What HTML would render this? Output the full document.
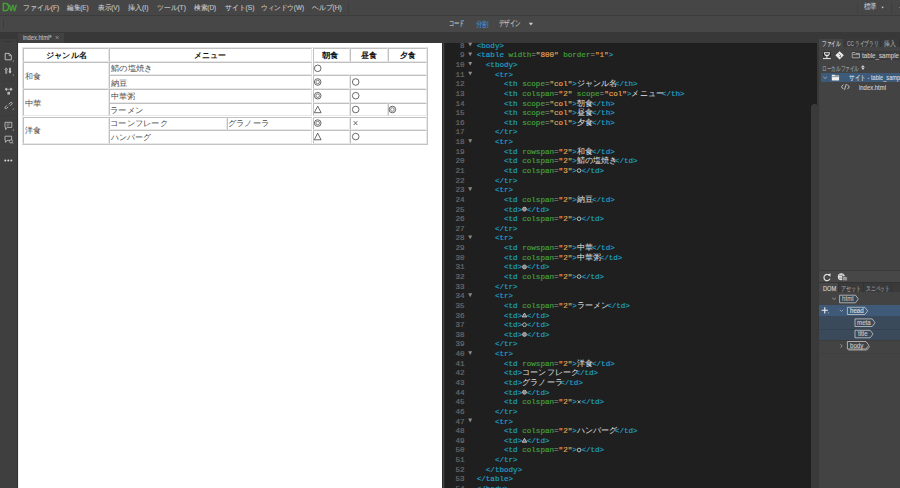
<!DOCTYPE html><html><head><meta charset="utf-8"><style>*{margin:0;padding:0;box-sizing:border-box}
html,body{width:900px;height:488px;overflow:hidden;background:#464646;font-family:"Liberation Sans",sans-serif}
.a{position:absolute}
.t{position:absolute;white-space:nowrap;transform-origin:0 0}
.c{position:absolute;box-sizing:border-box;border-style:solid;border-width:1px;border-color:#c0c0c0 #e8e8e8 #e8e8e8 #c0c0c0}
.ln{position:absolute;left:444px;width:372px;height:10px;font-family:"Liberation Mono",monospace;font-size:7.62px;line-height:10px;white-space:pre;color:#d8d8d8}
.ln b{font-weight:normal}
.n{position:absolute;right:0;width:0}
.tg{color:#1fa0c2}.at{color:#44a03c}.vl{color:#e2a452}.eq{color:#9a9a9a}.tx{color:#e0e0e0}
.j{display:inline-block;font-family:"Liberation Sans",sans-serif;font-size:7.5px;letter-spacing:0.1px;-webkit-text-stroke:0;vertical-align:top;overflow:visible;color:#e4e4e4}
</style></head><body>
<div class="a" style="left:0px;top:0px;width:900px;height:15px;background:#464646;"></div>
<div class="a" style="left:0px;top:15px;width:900px;height:1px;background:#3c3c3c;"></div>
<div class="a" style="left:0px;top:16px;width:900px;height:16px;background:#474747;"></div>
<div class="a" style="left:0px;top:32px;width:900px;height:11px;background:#383838;"></div>
<div class="a" style="left:18px;top:33px;width:46px;height:10px;background:#414141;"></div>
<div class="a" style="left:0px;top:39px;width:17px;height:449px;background:#3f3f3f;"></div>
<div class="a" style="left:17px;top:39px;width:1px;height:449px;background:#333333;"></div>
<div class="a" style="left:18px;top:43px;width:424px;height:445px;background:#ffffff;"></div>
<div class="a" style="left:18px;top:43px;width:1px;height:445px;background:#f0f0f0;"></div>
<div class="a" style="left:442px;top:43px;width:1px;height:445px;background:#2c2c2c;"></div>
<div class="a" style="left:443px;top:43px;width:1px;height:445px;background:#444444;"></div>
<div class="a" style="left:444px;top:43px;width:1px;height:445px;background:#2a2a2a;"></div>
<div class="a" style="left:445px;top:43px;width:372px;height:445px;background:#1f1f1f;"></div>
<div class="a" style="left:817px;top:32px;width:83px;height:456px;background:#434343;"></div>
<div class="a" style="left:817px;top:32px;width:2px;height:456px;background:#383838;"></div>
<div class="a" style="left:819px;top:32px;width:81px;height:7px;background:#383838;"></div>
<div class="a" style="left:811px;top:104px;width:7px;height:390px;background:#3a3a3a;border-radius:3.5px 3.5px 0 0"></div>
<div class="a" style="left:348px;top:3px;width:1px;height:10px;background:#3e3e3e;"></div>
<div class="a" style="left:857px;top:3px;width:1px;height:10px;background:#3e3e3e;"></div>
<div class="a" style="left:891px;top:3px;width:1px;height:10px;background:#3e3e3e;"></div>
<div class="a" style="left:3px;top:19px;width:1px;height:10px;background:#3c3c3c;"></div>
<div class="a" style="left:3px;top:41px;width:10px;height:1px;background:#353535;"></div>
<svg class="a" style="left:0;top:0" width="900" height="488"><path d="M881.3 6.8 L883.9 6.8 L882.6 8.6Z" fill="#d0d0d0"/><path d="M528.8 22.8 L533 22.8 L530.9 25.6Z" fill="#d0d0d0"/><path d="M55.6 36 L58.7 39.1 M58.7 36 L55.6 39.1" stroke="#8e8e8e" stroke-width="0.9"/></svg>
<div class="t" style="left:2px;top:0.6px;font-size:10.5px;line-height:12px;color:#45a632;letter-spacing:-0.5px;-webkit-text-stroke:0.3px #45a632">Dw</div>
<div class="a" style="left:898.8px;top:6.5px;width:1.2px;height:1.5px;background:#7a7a7a;"></div>
<div class="a" style="left:22px;top:47px;width:406px;height:98px;border:1px solid;border-color:#e6e6e6 #c4c4c4 #c4c4c4 #e6e6e6"></div>
<div class="c" style="left:23px;top:48.0px;width:85.5px;height:13.5px"></div>
<div class="c" style="left:109px;top:48.0px;width:203px;height:13.5px"></div>
<div class="c" style="left:312.5px;top:48.0px;width:37.0px;height:13.5px"></div>
<div class="c" style="left:350px;top:48.0px;width:37.5px;height:13.5px"></div>
<div class="c" style="left:388px;top:48.0px;width:39px;height:13.5px"></div>
<div class="c" style="left:23px;top:61.7px;width:85.5px;height:27.2px"></div>
<div class="c" style="left:109px;top:61.7px;width:203px;height:13.5px"></div>
<div class="c" style="left:312.5px;top:61.7px;width:114.5px;height:13.5px"></div>
<div class="c" style="left:109px;top:75.4px;width:203px;height:13.5px"></div>
<div class="c" style="left:312.5px;top:75.4px;width:37.0px;height:13.5px"></div>
<div class="c" style="left:350px;top:75.4px;width:77px;height:13.5px"></div>
<div class="c" style="left:23px;top:89.1px;width:85.5px;height:27.2px"></div>
<div class="c" style="left:109px;top:89.1px;width:203px;height:13.5px"></div>
<div class="c" style="left:312.5px;top:89.1px;width:37.0px;height:13.5px"></div>
<div class="c" style="left:350px;top:89.1px;width:77px;height:13.5px"></div>
<div class="c" style="left:109px;top:102.8px;width:203px;height:13.5px"></div>
<div class="c" style="left:312.5px;top:102.8px;width:37.0px;height:13.5px"></div>
<div class="c" style="left:350px;top:102.8px;width:37.5px;height:13.5px"></div>
<div class="c" style="left:388px;top:102.8px;width:39px;height:13.5px"></div>
<div class="c" style="left:23px;top:116.5px;width:85.5px;height:27.2px"></div>
<div class="c" style="left:109px;top:116.5px;width:117.5px;height:13.5px"></div>
<div class="c" style="left:227px;top:116.5px;width:85px;height:13.5px"></div>
<div class="c" style="left:312.5px;top:116.5px;width:37.0px;height:13.5px"></div>
<div class="c" style="left:350px;top:116.5px;width:77px;height:13.5px"></div>
<div class="c" style="left:109px;top:130.2px;width:203px;height:13.5px"></div>
<div class="c" style="left:312.5px;top:130.2px;width:37.0px;height:13.5px"></div>
<div class="c" style="left:350px;top:130.2px;width:77px;height:13.5px"></div>
<svg class="a" style="left:0;top:0" width="900" height="488"><circle cx="317.7" cy="68.3" r="3.3" fill="none" stroke="#444" stroke-width="0.8"/><circle cx="317.7" cy="82" r="3.3" fill="none" stroke="#444" stroke-width="0.8"/><circle cx="317.7" cy="82" r="1.8" fill="none" stroke="#555" stroke-width="0.7"/><circle cx="355.7" cy="82" r="3.3" fill="none" stroke="#444" stroke-width="0.8"/><circle cx="317.7" cy="95.7" r="3.3" fill="none" stroke="#444" stroke-width="0.8"/><circle cx="317.7" cy="95.7" r="1.8" fill="none" stroke="#555" stroke-width="0.7"/><circle cx="355.7" cy="95.7" r="3.3" fill="none" stroke="#444" stroke-width="0.8"/><path d="M314.3 112.7 L317.7 106.1 L321.1 112.7Z" fill="none" stroke="#444" stroke-width="0.8"/><circle cx="355.7" cy="109.5" r="3.3" fill="none" stroke="#444" stroke-width="0.8"/><circle cx="392.4" cy="109.5" r="3.3" fill="none" stroke="#444" stroke-width="0.8"/><circle cx="392.4" cy="109.5" r="1.8" fill="none" stroke="#555" stroke-width="0.7"/><circle cx="317.7" cy="123.1" r="3.3" fill="none" stroke="#444" stroke-width="0.8"/><circle cx="317.7" cy="123.1" r="1.8" fill="none" stroke="#555" stroke-width="0.7"/><path d="M353.7 121.1 L357.4 125.1 M357.4 121.1 L353.7 125.1" stroke="#444" stroke-width="0.8"/><path d="M314.3 139.79999999999998 L317.7 133.2 L321.1 139.79999999999998Z" fill="none" stroke="#444" stroke-width="0.8"/><circle cx="355.7" cy="136.6" r="3.3" fill="none" stroke="#444" stroke-width="0.8"/></svg>
<div class="a" style="left:819px;top:39px;width:24px;height:8px;background:#454545;"></div>
<div class="a" style="left:843px;top:39px;width:57px;height:8px;background:#3a3a3a;"></div>
<div class="a" style="left:880px;top:39px;width:1px;height:8px;background:#333333;"></div>
<div class="a" style="left:899px;top:39px;width:1px;height:8px;background:#333333;"></div>
<div class="a" style="left:851px;top:51px;width:49px;height:8.5px;background:#3d3d3d;border:1px solid #393939;border-right:none"></div>
<div class="a" style="left:820.7px;top:73.2px;width:79.3px;height:9.1px;background:#3d5a78;"></div>
<div class="a" style="left:819px;top:270px;width:81px;height:1px;background:#3a3a3a;"></div>
<div class="a" style="left:819px;top:271px;width:81px;height:11px;background:#474747;"></div>
<div class="a" style="left:819px;top:282px;width:81px;height:1px;background:#333333;"></div>
<div class="a" style="left:819px;top:283px;width:81px;height:8.5px;background:#3a3a3a;"></div>
<div class="a" style="left:819px;top:283px;width:19.5px;height:8.5px;background:#474747;"></div>
<div class="a" style="left:838.3px;top:283px;width:0.8px;height:8.5px;background:#333333;"></div>
<div class="a" style="left:862.5px;top:283px;width:0.8px;height:8.5px;background:#333333;"></div>
<div class="a" style="left:891px;top:283px;width:0.8px;height:8.5px;background:#333333;"></div>
<div class="a" style="left:819px;top:305.3px;width:81px;height:10.7px;background:#3e5a78;"></div>
<div class="a" style="left:819px;top:316.3px;width:81px;height:23.7px;background:#3b4a5a;"></div>
<div class="a" style="left:819px;top:328.5px;width:81px;height:0.5px;background:#36424f;"></div>
<div class="a" style="left:819px;top:340px;width:81px;height:0.5px;background:#3c3c3c;"></div>
<div class="a" style="left:819px;top:352.5px;width:81px;height:0.6px;background:#3f3f3f;"></div>
<svg class="a" style="left:0;top:0" width="900" height="488"><path d="M823 51.6 H830.8 V56.2 H823Z" fill="#1e1e1e"/><path d="M823.6 52.3 H830.2 L829.2 55.4 Q826.9 57 824.6 55.4Z" fill="#e8e8e8"/><path d="M824.8 52.9 H829 L828.5 54.5 Q826.9 55.3 825.3 54.5Z" fill="#555"/><path d="M826.9 56 V58.3 M823 58.6 H830.8" stroke="#e8e8e8" stroke-width="1"/><path d="M839.6 51.2 L843.8 55.3 L839.6 59.4 L835.4 55.3Z" fill="#ececec"/><path d="M838.6 53.6 L840.6 55.6 V57.4 M840.6 55.6 L839.5 57" stroke="#555" stroke-width="0.7" fill="none"/><path d="M852.2 52.6 H855 L855.8 53.4 H859.4 V57.8 H852.2Z" fill="none" stroke="#bdbdbd" stroke-width="0.8"/><path d="M852.6 54.6 H859" stroke="#bdbdbd" stroke-width="0.7"/><path d="M860.8 67.4 L862.9 65.3 L865 67.4Z" fill="#d8d8d8"/><path d="M861.9 68 H863.9 V69.4 H861.9Z" fill="#d0d0d0"/><path d="M823.3 76.8 L825.1 78.5 L826.9 76.8" stroke="#aab8c8" stroke-width="0.8" fill="none"/><path d="M831.8 74.8 H834.6 L835.4 75.6 H839.1 V80.4 H831.8Z" fill="#f0f0f0"/><path d="M832.2 76.6 H838.7" stroke="#3d5a78" stroke-width="0.6"/><path d="M843.4 84.6 L841.5 86.9 L843.4 89.2 M847.4 84.6 L849.3 86.9 L847.4 89.2 M846.3 84 L844.5 89.8" stroke="#d0d0d0" stroke-width="0.9" fill="none"/><path d="M829.6 275.8 A3.1 3.1 0 1 0 829.9 278.8" stroke="#e0e0e0" stroke-width="1.2" fill="none"/><path d="M827.6 274.2 L830.6 273.6 L830.4 276.8Z" fill="#e0e0e0"/><circle cx="841.3" cy="276.8" r="3.5" fill="#e0e0e0"/><path d="M839 275.2 Q841 276 843.4 274.8 M839.2 278.2 Q841 277.6 843.6 278.6" stroke="#555" stroke-width="0.6" fill="none"/><rect x="842.6" y="276.6" width="4.6" height="4.2" fill="#9a9a9a" stroke="#474747" stroke-width="0.6"/><path d="M832.2 297.8 L834.1 299.5 L836 297.8" stroke="#a8a8a8" stroke-width="0.8" fill="none"/><path d="M839.8 309.8 L841.5 311.4 L843.2 309.8" stroke="#a8b4c0" stroke-width="0.8" fill="none"/><path d="M840.5 344.2 L842.2 345.9 L840.5 347.6" stroke="#a8a8a8" stroke-width="0.8" fill="none"/><path d="M824.8 307.2 V313.4 M821.7 310.3 H827.9" stroke="#f0f0f0" stroke-width="1.1"/><path d="M827.6 313.2 L828.8 313.2 L828.8 312Z" fill="#d0d0d0"/><path d="M839.6 295.2 H855.5 L858.3 299.0 L855.5 302.8 H839.6Z" fill="#3a4552" stroke="#d0d0d0" stroke-width="0.75"/><path d="M847.4 307.3 H864.9000000000001 L867.7 310.9 L864.9000000000001 314.5 H847.4Z" fill="#3e5a78" stroke="#d0d0d0" stroke-width="0.75"/><path d="M855.0 318.9 H872.2 L875.0 322.7 L872.2 326.5 H855.0Z" fill="#3b4a5a" stroke="#d0d0d0" stroke-width="0.75"/><path d="M855.0 330.3 H870.2 L873.0 334.05 L870.2 337.8 H855.0Z" fill="#3b4a5a" stroke="#d0d0d0" stroke-width="0.75"/><path d="M848.4 350.0 H867.0 L869.8 346.25" stroke="#c8c8c8" stroke-width="0.7" fill="none"/><path d="M847.4 341.5 H866.0 L868.8 345.25 L866.0 349.0 H847.4Z" fill="#434343" stroke="#d0d0d0" stroke-width="0.75"/></svg>
<div class="t" style="left:842.3px;top:295.2px;font-size:7px;line-height:7px;color:#c4c0bc;font-weight:normal;-webkit-text-stroke:0.1px;transform:scaleX(0.88)">html</div>
<div class="t" style="left:849.8px;top:307.3px;font-size:7px;line-height:7px;color:#e0e0e0;font-weight:normal;-webkit-text-stroke:0.1px;transform:scaleX(0.88)">head</div>
<div class="t" style="left:857.4px;top:319px;font-size:7px;line-height:7px;color:#d0ccc8;font-weight:normal;-webkit-text-stroke:0.1px;transform:scaleX(0.88)">meta</div>
<div class="t" style="left:857.6px;top:330.4px;font-size:7px;line-height:7px;color:#d0ccc8;font-weight:normal;-webkit-text-stroke:0.1px;transform:scaleX(0.88)">title</div>
<div class="t" style="left:849.8px;top:341.6px;font-size:7px;line-height:7px;color:#d0ccc8;font-weight:normal;-webkit-text-stroke:0.1px;transform:scaleX(0.88)">body</div>
<svg class="a" style="left:0;top:0" width="20" height="200"><path d="M5.2 53.4 H9.3 L11.3 55.4 V59.8 H5.2Z" fill="none" stroke="#c8c8c8" stroke-width="0.9"/><path d="M9.1 53.6 V55.6 H11.1" fill="none" stroke="#c8c8c8" stroke-width="0.7"/><path d="M12.4 61.6 L13.8 61.6 L13.8 60.2Z" fill="#bbb"/><path d="M6.2 67.8 L4.8 69.6 H5.7 V73.4 H6.7 V69.6 H7.6Z" fill="none" stroke="#c8c8c8" stroke-width="0.7"/><path d="M9.3 67.8 V71.6 H8.4 L10 73.6 L11.6 71.6 H10.7 V67.8Z" fill="#dcdcdc"/><path d="M12.4 75.6 L13.8 75.6 L13.8 74.2Z" fill="#bbb"/><path d="M2 81.3 H15" stroke="#3a3a3a" stroke-width="0.7"/><path d="M5 89.3 L6.7 88 V90.6Z M12.3 89.3 L10.6 88 V90.6Z M6.5 89.3 H10.8" fill="#d0d0d0" stroke="#d0d0d0" stroke-width="0.6"/><rect x="7.4" y="91.8" width="2.6" height="2.8" fill="#b8b8b8"/><path d="M8.6 104.4 L10.4 102.6 Q11.2 101.9 11.9 102.6 Q12.5 103.3 11.8 104 L10 105.8" fill="none" stroke="#c0c0c0" stroke-width="0.9"/><path d="M8.2 106.8 L6.6 108.4 Q5.9 109.1 5.2 108.4 Q4.6 107.7 5.3 107 L6.9 105.4" fill="none" stroke="#c0c0c0" stroke-width="0.9"/><path d="M12.4 109.6 L13.8 109.6 L13.8 108.2Z" fill="#bbb"/><path d="M2 115.5 H15" stroke="#3a3a3a" stroke-width="0.7"/><path d="M5 122.3 H11.8 V127.4 H7.2 L5.6 129.6 V127.4 H5Z" fill="none" stroke="#c8c8c8" stroke-width="0.8"/><path d="M6.6 124 H10 M6.6 125.8 H8.8" stroke="#c8c8c8" stroke-width="0.6"/><path d="M12.4 130.4 L13.8 130.4 L13.8 129Z" fill="#bbb"/><path d="M5 136.2 H11.6 V140.4 H7 L5.6 142.4 V140.4 H5Z" fill="none" stroke="#c8c8c8" stroke-width="0.8"/><circle cx="11" cy="141.4" r="1.6" fill="#3f3f3f" stroke="#c8c8c8" stroke-width="0.7"/><path d="M12.1 142.5 L13 143.5" stroke="#c8c8c8" stroke-width="0.8"/><path d="M2 150 H15" stroke="#3a3a3a" stroke-width="0.7"/><circle cx="5.3" cy="160.4" r="1" fill="#d8d8d8"/><circle cx="8.3" cy="160.4" r="1" fill="#d8d8d8"/><circle cx="11.3" cy="160.4" r="1" fill="#d8d8d8"/></svg>
<div class="t" style="left:23.41px;top:4.50px;font-size:6.8px;line-height:6.8px;color:#c4c4c4;font-weight:normal;transform:scaleX(0.989);-webkit-text-stroke:0.12px">ファイル(F)</div>
<div class="t" style="left:66.70px;top:5.00px;font-size:6.8px;line-height:6.8px;color:#c4c4c4;font-weight:normal;transform:scaleX(0.939);-webkit-text-stroke:0.12px">編集(E)</div>
<div class="t" style="left:97.50px;top:5.00px;font-size:6.8px;line-height:6.8px;color:#c4c4c4;font-weight:normal;transform:scaleX(0.938);-webkit-text-stroke:0.12px">表示(V)</div>
<div class="t" style="left:128.30px;top:5.00px;font-size:6.8px;line-height:6.8px;color:#c4c4c4;font-weight:normal;transform:scaleX(1.005);-webkit-text-stroke:0.12px">挿入(I)</div>
<div class="t" style="left:156.83px;top:4.50px;font-size:6.8px;line-height:6.8px;color:#c4c4c4;font-weight:normal;transform:scaleX(0.972);-webkit-text-stroke:0.12px">ツール(T)</div>
<div class="t" style="left:193.90px;top:5.00px;font-size:6.8px;line-height:6.8px;color:#c4c4c4;font-weight:normal;transform:scaleX(0.950);-webkit-text-stroke:0.12px">検索(D)</div>
<div class="t" style="left:225.00px;top:4.50px;font-size:6.8px;line-height:6.8px;color:#c4c4c4;font-weight:normal;transform:scaleX(0.976);-webkit-text-stroke:0.12px">サイト(S)</div>
<div class="t" style="left:260.76px;top:4.50px;font-size:6.8px;line-height:6.8px;color:#c4c4c4;font-weight:normal;transform:scaleX(0.938);-webkit-text-stroke:0.12px">ウィンドウ(W)</div>
<div class="t" style="left:311.82px;top:5.00px;font-size:6.8px;line-height:6.8px;color:#c4c4c4;font-weight:normal;transform:scaleX(0.980);-webkit-text-stroke:0.12px">ヘルプ(H)</div>
<div class="t" style="left:864.00px;top:3.20px;font-size:7.5px;line-height:7.5px;color:#d0d0d0;font-weight:normal;transform:scaleX(0.800);-webkit-text-stroke:0px">標準</div>
<div class="t" style="left:449.15px;top:20.20px;font-size:7.5px;line-height:7.5px;color:#c8c8c8;font-weight:normal;transform:scaleX(0.655);-webkit-text-stroke:0.12px">コード</div>
<div class="t" style="left:475.60px;top:20.70px;font-size:7.5px;line-height:7.5px;color:#3f9df0;font-weight:normal;transform:scaleX(0.812);-webkit-text-stroke:0px">分割</div>
<div class="t" style="left:498.90px;top:20.20px;font-size:7.5px;line-height:7.5px;color:#c8c8c8;font-weight:normal;transform:scaleX(0.687);-webkit-text-stroke:0.12px">デザイン</div>
<div class="t" style="left:23.30px;top:34.40px;font-size:7px;line-height:7px;color:#bdbdbd;font-weight:normal;transform:scaleX(0.824);-webkit-text-stroke:0.12px">index.html*</div>
<div class="t" style="left:45.77px;top:52.20px;font-size:7.8px;line-height:7.8px;color:#111;font-weight:bold;transform:scaleX(1.029);-webkit-text-stroke:0px">ジャンル名</div>
<div class="t" style="left:194.41px;top:51.70px;font-size:7.8px;line-height:7.8px;color:#111;font-weight:bold;transform:scaleX(0.987);-webkit-text-stroke:0px">メニュー</div>
<div class="t" style="left:322.20px;top:52.20px;font-size:7.8px;line-height:7.8px;color:#111;font-weight:bold;transform:scaleX(1.050);-webkit-text-stroke:0px">朝食</div>
<div class="t" style="left:360.60px;top:52.20px;font-size:7.8px;line-height:7.8px;color:#111;font-weight:bold;transform:scaleX(0.994);-webkit-text-stroke:0px">昼食</div>
<div class="t" style="left:399.70px;top:52.20px;font-size:7.8px;line-height:7.8px;color:#111;font-weight:bold;transform:scaleX(0.950);-webkit-text-stroke:0px">夕食</div>
<div class="t" style="left:24.80px;top:73.00px;font-size:7.8px;line-height:7.8px;color:#484848;font-weight:normal;transform:scaleX(0.994);-webkit-text-stroke:0px">和食</div>
<div class="t" style="left:24.80px;top:100.00px;font-size:7.8px;line-height:7.8px;color:#484848;font-weight:normal;transform:scaleX(1.060);-webkit-text-stroke:0px">中華</div>
<div class="t" style="left:24.80px;top:127.00px;font-size:7.8px;line-height:7.8px;color:#484848;font-weight:normal;transform:scaleX(0.994);-webkit-text-stroke:0px">洋食</div>
<div class="t" style="left:110.60px;top:64.90px;font-size:7.8px;line-height:7.8px;color:#484848;font-weight:normal;transform:scaleX(1.037);-webkit-text-stroke:0px">鯖の塩焼き</div>
<div class="t" style="left:110.60px;top:79.50px;font-size:7.8px;line-height:7.8px;color:#484848;font-weight:normal;transform:scaleX(1.040);-webkit-text-stroke:0px">納豆</div>
<div class="t" style="left:110.60px;top:93.20px;font-size:7.8px;line-height:7.8px;color:#484848;font-weight:normal;transform:scaleX(1.008);-webkit-text-stroke:0px">中華粥</div>
<div class="t" style="left:109.55px;top:106.60px;font-size:7.8px;line-height:7.8px;color:#484848;font-weight:normal;transform:scaleX(1.047);-webkit-text-stroke:0px">ラーメン</div>
<div class="t" style="left:109.56px;top:120.10px;font-size:7.8px;line-height:7.8px;color:#484848;font-weight:normal;transform:scaleX(1.037);-webkit-text-stroke:0px">コーンフレーク</div>
<div class="t" style="left:227.57px;top:120.10px;font-size:7.8px;line-height:7.8px;color:#484848;font-weight:normal;transform:scaleX(1.029);-webkit-text-stroke:0px">グラノーラ</div>
<div class="t" style="left:110.60px;top:133.60px;font-size:7.8px;line-height:7.8px;color:#484848;font-weight:normal;transform:scaleX(0.985);-webkit-text-stroke:0px">ハンバーグ</div>
<div class="t" style="left:822.25px;top:39.70px;font-size:7px;line-height:7px;color:#d8d8d8;font-weight:normal;transform:scaleX(0.652);-webkit-text-stroke:0.12px">ファイル</div>
<div class="t" style="left:846.80px;top:39.70px;font-size:7px;line-height:7px;color:#a8a8a8;font-weight:normal;transform:scaleX(0.669);-webkit-text-stroke:0.12px">CC ライブラリ</div>
<div class="t" style="left:884.40px;top:40.20px;font-size:7px;line-height:7px;color:#a8a8a8;font-weight:normal;transform:scaleX(0.821);-webkit-text-stroke:0.12px">挿入</div>
<div class="t" style="left:861.60px;top:51.90px;font-size:7.5px;line-height:7.5px;color:#c8c8c8;font-weight:normal;transform:scaleX(0.831);-webkit-text-stroke:0.12px">table_sample 2</div>
<div class="t" style="left:822.34px;top:64.70px;font-size:7px;line-height:7px;color:#a0a0a0;font-weight:normal;transform:scaleX(0.662);-webkit-text-stroke:0.12px">ローカルファイル</div>
<div class="t" style="left:849.30px;top:73.90px;font-size:7px;line-height:7px;color:#d0dae4;font-weight:normal;transform:scaleX(0.807);-webkit-text-stroke:0.12px">サイト - table_sample 2</div>
<div class="t" style="left:859.40px;top:84.20px;font-size:7px;line-height:7px;color:#d0d0d0;font-weight:normal;transform:scaleX(0.847);-webkit-text-stroke:0.12px">index.html</div>
<div class="t" style="left:823.00px;top:284.70px;font-size:7px;line-height:7px;color:#d8d8d8;font-weight:normal;transform:scaleX(0.812);-webkit-text-stroke:0.12px">DOM</div>
<div class="t" style="left:841.07px;top:284.70px;font-size:7px;line-height:7px;color:#a0a0a0;font-weight:normal;transform:scaleX(0.732);-webkit-text-stroke:0.12px">アセット</div>
<div class="t" style="left:865.92px;top:284.70px;font-size:7px;line-height:7px;color:#a0a0a0;font-weight:normal;transform:scaleX(0.681);-webkit-text-stroke:0.12px">スニペット</div>
<div class="t" style="left:444px;top:40.70px;width:20.6px;text-align:right;font-family:'Liberation Mono',monospace;font-size:7.62px;line-height:10px;color:#6a6a6a;-webkit-text-stroke:0.2px">8</div>
<div class="t" style="left:476.70px;top:40.70px;font-family:'Liberation Mono',monospace;font-size:7.583px;line-height:10px;white-space:pre;-webkit-text-stroke:0.18px"><span class="tg">&lt;body&gt;</span></div>
<div class="t" style="left:444px;top:50.34px;width:20.6px;text-align:right;font-family:'Liberation Mono',monospace;font-size:7.62px;line-height:10px;color:#6a6a6a;-webkit-text-stroke:0.2px">9</div>
<div class="t" style="left:476.70px;top:50.34px;font-family:'Liberation Mono',monospace;font-size:7.583px;line-height:10px;white-space:pre;-webkit-text-stroke:0.18px"><span class="tg">&lt;table </span><span class="at">width</span><span class="eq">=</span><span class="vl">&quot;800&quot;</span><span class="tx"> </span><span class="at">border</span><span class="eq">=</span><span class="vl">&quot;1&quot;</span><span class="tg">&gt;</span></div>
<div class="t" style="left:444px;top:59.97px;width:20.6px;text-align:right;font-family:'Liberation Mono',monospace;font-size:7.62px;line-height:10px;color:#6a6a6a;-webkit-text-stroke:0.2px">10</div>
<div class="t" style="left:485.80px;top:59.97px;font-family:'Liberation Mono',monospace;font-size:7.583px;line-height:10px;white-space:pre;-webkit-text-stroke:0.18px"><span class="tg">&lt;tbody&gt;</span></div>
<div class="t" style="left:444px;top:69.61px;width:20.6px;text-align:right;font-family:'Liberation Mono',monospace;font-size:7.62px;line-height:10px;color:#6a6a6a;-webkit-text-stroke:0.2px">11</div>
<div class="t" style="left:494.90px;top:69.61px;font-family:'Liberation Mono',monospace;font-size:7.583px;line-height:10px;white-space:pre;-webkit-text-stroke:0.18px"><span class="tg">&lt;tr&gt;</span></div>
<div class="t" style="left:444px;top:79.24px;width:20.6px;text-align:right;font-family:'Liberation Mono',monospace;font-size:7.62px;line-height:10px;color:#6a6a6a;-webkit-text-stroke:0.2px">12</div>
<div class="t" style="left:504.00px;top:79.24px;font-family:'Liberation Mono',monospace;font-size:7.583px;line-height:10px;white-space:pre;-webkit-text-stroke:0.18px"><span class="tg">&lt;th </span><span class="at">scope</span><span class="eq">=</span><span class="vl">&quot;col&quot;</span><span class="tg">&gt;</span><span class="j" style="width:38.0px">ジャンル名</span><span class="tg">&lt;/th&gt;</span></div>
<div class="t" style="left:444px;top:88.88px;width:20.6px;text-align:right;font-family:'Liberation Mono',monospace;font-size:7.62px;line-height:10px;color:#6a6a6a;-webkit-text-stroke:0.2px">13</div>
<div class="t" style="left:504.00px;top:88.88px;font-family:'Liberation Mono',monospace;font-size:7.583px;line-height:10px;white-space:pre;-webkit-text-stroke:0.18px"><span class="tg">&lt;th </span><span class="at">colspan</span><span class="eq">=</span><span class="vl">&quot;2&quot;</span><span class="tx"> </span><span class="at">scope</span><span class="eq">=</span><span class="vl">&quot;col&quot;</span><span class="tg">&gt;</span><span class="j" style="width:30.4px">メニュー</span><span class="tg">&lt;/th&gt;</span></div>
<div class="t" style="left:444px;top:98.52px;width:20.6px;text-align:right;font-family:'Liberation Mono',monospace;font-size:7.62px;line-height:10px;color:#6a6a6a;-webkit-text-stroke:0.2px">14</div>
<div class="t" style="left:504.00px;top:98.52px;font-family:'Liberation Mono',monospace;font-size:7.583px;line-height:10px;white-space:pre;-webkit-text-stroke:0.18px"><span class="tg">&lt;th </span><span class="at">scope</span><span class="eq">=</span><span class="vl">&quot;col&quot;</span><span class="tg">&gt;</span><span class="j" style="width:15.2px">朝食</span><span class="tg">&lt;/th&gt;</span></div>
<div class="t" style="left:444px;top:108.15px;width:20.6px;text-align:right;font-family:'Liberation Mono',monospace;font-size:7.62px;line-height:10px;color:#6a6a6a;-webkit-text-stroke:0.2px">15</div>
<div class="t" style="left:504.00px;top:108.15px;font-family:'Liberation Mono',monospace;font-size:7.583px;line-height:10px;white-space:pre;-webkit-text-stroke:0.18px"><span class="tg">&lt;th </span><span class="at">scope</span><span class="eq">=</span><span class="vl">&quot;col&quot;</span><span class="tg">&gt;</span><span class="j" style="width:15.2px">昼食</span><span class="tg">&lt;/th&gt;</span></div>
<div class="t" style="left:444px;top:117.79px;width:20.6px;text-align:right;font-family:'Liberation Mono',monospace;font-size:7.62px;line-height:10px;color:#6a6a6a;-webkit-text-stroke:0.2px">16</div>
<div class="t" style="left:504.00px;top:117.79px;font-family:'Liberation Mono',monospace;font-size:7.583px;line-height:10px;white-space:pre;-webkit-text-stroke:0.18px"><span class="tg">&lt;th </span><span class="at">scope</span><span class="eq">=</span><span class="vl">&quot;col&quot;</span><span class="tg">&gt;</span><span class="j" style="width:15.2px">夕食</span><span class="tg">&lt;/th&gt;</span></div>
<div class="t" style="left:444px;top:127.42px;width:20.6px;text-align:right;font-family:'Liberation Mono',monospace;font-size:7.62px;line-height:10px;color:#6a6a6a;-webkit-text-stroke:0.2px">17</div>
<div class="t" style="left:494.90px;top:127.42px;font-family:'Liberation Mono',monospace;font-size:7.583px;line-height:10px;white-space:pre;-webkit-text-stroke:0.18px"><span class="tg">&lt;/tr&gt;</span></div>
<div class="t" style="left:444px;top:137.06px;width:20.6px;text-align:right;font-family:'Liberation Mono',monospace;font-size:7.62px;line-height:10px;color:#6a6a6a;-webkit-text-stroke:0.2px">18</div>
<div class="t" style="left:494.90px;top:137.06px;font-family:'Liberation Mono',monospace;font-size:7.583px;line-height:10px;white-space:pre;-webkit-text-stroke:0.18px"><span class="tg">&lt;tr&gt;</span></div>
<div class="t" style="left:444px;top:146.70px;width:20.6px;text-align:right;font-family:'Liberation Mono',monospace;font-size:7.62px;line-height:10px;color:#6a6a6a;-webkit-text-stroke:0.2px">19</div>
<div class="t" style="left:504.00px;top:146.70px;font-family:'Liberation Mono',monospace;font-size:7.583px;line-height:10px;white-space:pre;-webkit-text-stroke:0.18px"><span class="tg">&lt;td </span><span class="at">rowspan</span><span class="eq">=</span><span class="vl">&quot;2&quot;</span><span class="tg">&gt;</span><span class="j" style="width:15.2px">和食</span><span class="tg">&lt;/td&gt;</span></div>
<div class="t" style="left:444px;top:156.33px;width:20.6px;text-align:right;font-family:'Liberation Mono',monospace;font-size:7.62px;line-height:10px;color:#6a6a6a;-webkit-text-stroke:0.2px">20</div>
<div class="t" style="left:504.00px;top:156.33px;font-family:'Liberation Mono',monospace;font-size:7.583px;line-height:10px;white-space:pre;-webkit-text-stroke:0.18px"><span class="tg">&lt;td </span><span class="at">colspan</span><span class="eq">=</span><span class="vl">&quot;2&quot;</span><span class="tg">&gt;</span><span class="j" style="width:38.0px">鯖の塩焼き</span><span class="tg">&lt;/td&gt;</span></div>
<div class="t" style="left:444px;top:165.97px;width:20.6px;text-align:right;font-family:'Liberation Mono',monospace;font-size:7.62px;line-height:10px;color:#6a6a6a;-webkit-text-stroke:0.2px">21</div>
<div class="t" style="left:504.00px;top:165.97px;font-family:'Liberation Mono',monospace;font-size:7.583px;line-height:10px;white-space:pre;-webkit-text-stroke:0.18px"><span class="tg">&lt;td </span><span class="at">colspan</span><span class="eq">=</span><span class="vl">&quot;3&quot;</span><span class="tg">&gt;</span><span class="j" style="width:4.55px"></span><span class="tg">&lt;/td&gt;</span></div>
<div class="t" style="left:444px;top:175.60px;width:20.6px;text-align:right;font-family:'Liberation Mono',monospace;font-size:7.62px;line-height:10px;color:#6a6a6a;-webkit-text-stroke:0.2px">22</div>
<div class="t" style="left:494.90px;top:175.60px;font-family:'Liberation Mono',monospace;font-size:7.583px;line-height:10px;white-space:pre;-webkit-text-stroke:0.18px"><span class="tg">&lt;/tr&gt;</span></div>
<div class="t" style="left:444px;top:185.24px;width:20.6px;text-align:right;font-family:'Liberation Mono',monospace;font-size:7.62px;line-height:10px;color:#6a6a6a;-webkit-text-stroke:0.2px">23</div>
<div class="t" style="left:494.90px;top:185.24px;font-family:'Liberation Mono',monospace;font-size:7.583px;line-height:10px;white-space:pre;-webkit-text-stroke:0.18px"><span class="tg">&lt;tr&gt;</span></div>
<div class="t" style="left:444px;top:194.88px;width:20.6px;text-align:right;font-family:'Liberation Mono',monospace;font-size:7.62px;line-height:10px;color:#6a6a6a;-webkit-text-stroke:0.2px">24</div>
<div class="t" style="left:504.00px;top:194.88px;font-family:'Liberation Mono',monospace;font-size:7.583px;line-height:10px;white-space:pre;-webkit-text-stroke:0.18px"><span class="tg">&lt;td </span><span class="at">colspan</span><span class="eq">=</span><span class="vl">&quot;2&quot;</span><span class="tg">&gt;</span><span class="j" style="width:15.2px">納豆</span><span class="tg">&lt;/td&gt;</span></div>
<div class="t" style="left:444px;top:204.51px;width:20.6px;text-align:right;font-family:'Liberation Mono',monospace;font-size:7.62px;line-height:10px;color:#6a6a6a;-webkit-text-stroke:0.2px">25</div>
<div class="t" style="left:504.00px;top:204.51px;font-family:'Liberation Mono',monospace;font-size:7.583px;line-height:10px;white-space:pre;-webkit-text-stroke:0.18px"><span class="tg">&lt;td&gt;</span><span class="j" style="width:4.55px"></span><span class="tg">&lt;/td&gt;</span></div>
<div class="t" style="left:444px;top:214.15px;width:20.6px;text-align:right;font-family:'Liberation Mono',monospace;font-size:7.62px;line-height:10px;color:#6a6a6a;-webkit-text-stroke:0.2px">26</div>
<div class="t" style="left:504.00px;top:214.15px;font-family:'Liberation Mono',monospace;font-size:7.583px;line-height:10px;white-space:pre;-webkit-text-stroke:0.18px"><span class="tg">&lt;td </span><span class="at">colspan</span><span class="eq">=</span><span class="vl">&quot;2&quot;</span><span class="tg">&gt;</span><span class="j" style="width:4.55px"></span><span class="tg">&lt;/td&gt;</span></div>
<div class="t" style="left:444px;top:223.78px;width:20.6px;text-align:right;font-family:'Liberation Mono',monospace;font-size:7.62px;line-height:10px;color:#6a6a6a;-webkit-text-stroke:0.2px">27</div>
<div class="t" style="left:494.90px;top:223.78px;font-family:'Liberation Mono',monospace;font-size:7.583px;line-height:10px;white-space:pre;-webkit-text-stroke:0.18px"><span class="tg">&lt;/tr&gt;</span></div>
<div class="t" style="left:444px;top:233.42px;width:20.6px;text-align:right;font-family:'Liberation Mono',monospace;font-size:7.62px;line-height:10px;color:#6a6a6a;-webkit-text-stroke:0.2px">28</div>
<div class="t" style="left:494.90px;top:233.42px;font-family:'Liberation Mono',monospace;font-size:7.583px;line-height:10px;white-space:pre;-webkit-text-stroke:0.18px"><span class="tg">&lt;tr&gt;</span></div>
<div class="t" style="left:444px;top:243.06px;width:20.6px;text-align:right;font-family:'Liberation Mono',monospace;font-size:7.62px;line-height:10px;color:#6a6a6a;-webkit-text-stroke:0.2px">29</div>
<div class="t" style="left:504.00px;top:243.06px;font-family:'Liberation Mono',monospace;font-size:7.583px;line-height:10px;white-space:pre;-webkit-text-stroke:0.18px"><span class="tg">&lt;td </span><span class="at">rowspan</span><span class="eq">=</span><span class="vl">&quot;2&quot;</span><span class="tg">&gt;</span><span class="j" style="width:15.2px">中華</span><span class="tg">&lt;/td&gt;</span></div>
<div class="t" style="left:444px;top:252.69px;width:20.6px;text-align:right;font-family:'Liberation Mono',monospace;font-size:7.62px;line-height:10px;color:#6a6a6a;-webkit-text-stroke:0.2px">30</div>
<div class="t" style="left:504.00px;top:252.69px;font-family:'Liberation Mono',monospace;font-size:7.583px;line-height:10px;white-space:pre;-webkit-text-stroke:0.18px"><span class="tg">&lt;td </span><span class="at">colspan</span><span class="eq">=</span><span class="vl">&quot;2&quot;</span><span class="tg">&gt;</span><span class="j" style="width:22.799999999999997px">中華粥</span><span class="tg">&lt;/td&gt;</span></div>
<div class="t" style="left:444px;top:262.33px;width:20.6px;text-align:right;font-family:'Liberation Mono',monospace;font-size:7.62px;line-height:10px;color:#6a6a6a;-webkit-text-stroke:0.2px">31</div>
<div class="t" style="left:504.00px;top:262.33px;font-family:'Liberation Mono',monospace;font-size:7.583px;line-height:10px;white-space:pre;-webkit-text-stroke:0.18px"><span class="tg">&lt;td&gt;</span><span class="j" style="width:4.55px"></span><span class="tg">&lt;/td&gt;</span></div>
<div class="t" style="left:444px;top:271.96px;width:20.6px;text-align:right;font-family:'Liberation Mono',monospace;font-size:7.62px;line-height:10px;color:#6a6a6a;-webkit-text-stroke:0.2px">32</div>
<div class="t" style="left:504.00px;top:271.96px;font-family:'Liberation Mono',monospace;font-size:7.583px;line-height:10px;white-space:pre;-webkit-text-stroke:0.18px"><span class="tg">&lt;td </span><span class="at">colspan</span><span class="eq">=</span><span class="vl">&quot;2&quot;</span><span class="tg">&gt;</span><span class="j" style="width:4.55px"></span><span class="tg">&lt;/td&gt;</span></div>
<div class="t" style="left:444px;top:281.60px;width:20.6px;text-align:right;font-family:'Liberation Mono',monospace;font-size:7.62px;line-height:10px;color:#6a6a6a;-webkit-text-stroke:0.2px">33</div>
<div class="t" style="left:494.90px;top:281.60px;font-family:'Liberation Mono',monospace;font-size:7.583px;line-height:10px;white-space:pre;-webkit-text-stroke:0.18px"><span class="tg">&lt;/tr&gt;</span></div>
<div class="t" style="left:444px;top:291.24px;width:20.6px;text-align:right;font-family:'Liberation Mono',monospace;font-size:7.62px;line-height:10px;color:#6a6a6a;-webkit-text-stroke:0.2px">34</div>
<div class="t" style="left:494.90px;top:291.24px;font-family:'Liberation Mono',monospace;font-size:7.583px;line-height:10px;white-space:pre;-webkit-text-stroke:0.18px"><span class="tg">&lt;tr&gt;</span></div>
<div class="t" style="left:444px;top:300.87px;width:20.6px;text-align:right;font-family:'Liberation Mono',monospace;font-size:7.62px;line-height:10px;color:#6a6a6a;-webkit-text-stroke:0.2px">35</div>
<div class="t" style="left:504.00px;top:300.87px;font-family:'Liberation Mono',monospace;font-size:7.583px;line-height:10px;white-space:pre;-webkit-text-stroke:0.18px"><span class="tg">&lt;td </span><span class="at">colspan</span><span class="eq">=</span><span class="vl">&quot;2&quot;</span><span class="tg">&gt;</span><span class="j" style="width:30.4px">ラーメン</span><span class="tg">&lt;/td&gt;</span></div>
<div class="t" style="left:444px;top:310.51px;width:20.6px;text-align:right;font-family:'Liberation Mono',monospace;font-size:7.62px;line-height:10px;color:#6a6a6a;-webkit-text-stroke:0.2px">36</div>
<div class="t" style="left:504.00px;top:310.51px;font-family:'Liberation Mono',monospace;font-size:7.583px;line-height:10px;white-space:pre;-webkit-text-stroke:0.18px"><span class="tg">&lt;td&gt;</span><span class="j" style="width:4.55px"></span><span class="tg">&lt;/td&gt;</span></div>
<div class="t" style="left:444px;top:320.14px;width:20.6px;text-align:right;font-family:'Liberation Mono',monospace;font-size:7.62px;line-height:10px;color:#6a6a6a;-webkit-text-stroke:0.2px">37</div>
<div class="t" style="left:504.00px;top:320.14px;font-family:'Liberation Mono',monospace;font-size:7.583px;line-height:10px;white-space:pre;-webkit-text-stroke:0.18px"><span class="tg">&lt;td&gt;</span><span class="j" style="width:4.55px"></span><span class="tg">&lt;/td&gt;</span></div>
<div class="t" style="left:444px;top:329.78px;width:20.6px;text-align:right;font-family:'Liberation Mono',monospace;font-size:7.62px;line-height:10px;color:#6a6a6a;-webkit-text-stroke:0.2px">38</div>
<div class="t" style="left:504.00px;top:329.78px;font-family:'Liberation Mono',monospace;font-size:7.583px;line-height:10px;white-space:pre;-webkit-text-stroke:0.18px"><span class="tg">&lt;td&gt;</span><span class="j" style="width:4.55px"></span><span class="tg">&lt;/td&gt;</span></div>
<div class="t" style="left:444px;top:339.42px;width:20.6px;text-align:right;font-family:'Liberation Mono',monospace;font-size:7.62px;line-height:10px;color:#6a6a6a;-webkit-text-stroke:0.2px">39</div>
<div class="t" style="left:494.90px;top:339.42px;font-family:'Liberation Mono',monospace;font-size:7.583px;line-height:10px;white-space:pre;-webkit-text-stroke:0.18px"><span class="tg">&lt;/tr&gt;</span></div>
<div class="t" style="left:444px;top:349.05px;width:20.6px;text-align:right;font-family:'Liberation Mono',monospace;font-size:7.62px;line-height:10px;color:#6a6a6a;-webkit-text-stroke:0.2px">40</div>
<div class="t" style="left:494.90px;top:349.05px;font-family:'Liberation Mono',monospace;font-size:7.583px;line-height:10px;white-space:pre;-webkit-text-stroke:0.18px"><span class="tg">&lt;tr&gt;</span></div>
<div class="t" style="left:444px;top:358.69px;width:20.6px;text-align:right;font-family:'Liberation Mono',monospace;font-size:7.62px;line-height:10px;color:#6a6a6a;-webkit-text-stroke:0.2px">41</div>
<div class="t" style="left:504.00px;top:358.69px;font-family:'Liberation Mono',monospace;font-size:7.583px;line-height:10px;white-space:pre;-webkit-text-stroke:0.18px"><span class="tg">&lt;td </span><span class="at">rowspan</span><span class="eq">=</span><span class="vl">&quot;2&quot;</span><span class="tg">&gt;</span><span class="j" style="width:15.2px">洋食</span><span class="tg">&lt;/td&gt;</span></div>
<div class="t" style="left:444px;top:368.32px;width:20.6px;text-align:right;font-family:'Liberation Mono',monospace;font-size:7.62px;line-height:10px;color:#6a6a6a;-webkit-text-stroke:0.2px">42</div>
<div class="t" style="left:504.00px;top:368.32px;font-family:'Liberation Mono',monospace;font-size:7.583px;line-height:10px;white-space:pre;-webkit-text-stroke:0.18px"><span class="tg">&lt;td&gt;</span><span class="j" style="width:53.199999999999996px">コーンフレーク</span><span class="tg">&lt;/td&gt;</span></div>
<div class="t" style="left:444px;top:377.96px;width:20.6px;text-align:right;font-family:'Liberation Mono',monospace;font-size:7.62px;line-height:10px;color:#6a6a6a;-webkit-text-stroke:0.2px">43</div>
<div class="t" style="left:504.00px;top:377.96px;font-family:'Liberation Mono',monospace;font-size:7.583px;line-height:10px;white-space:pre;-webkit-text-stroke:0.18px"><span class="tg">&lt;td&gt;</span><span class="j" style="width:38.0px">グラノーラ</span><span class="tg">&lt;/td&gt;</span></div>
<div class="t" style="left:444px;top:387.60px;width:20.6px;text-align:right;font-family:'Liberation Mono',monospace;font-size:7.62px;line-height:10px;color:#6a6a6a;-webkit-text-stroke:0.2px">44</div>
<div class="t" style="left:504.00px;top:387.60px;font-family:'Liberation Mono',monospace;font-size:7.583px;line-height:10px;white-space:pre;-webkit-text-stroke:0.18px"><span class="tg">&lt;td&gt;</span><span class="j" style="width:4.55px"></span><span class="tg">&lt;/td&gt;</span></div>
<div class="t" style="left:444px;top:397.23px;width:20.6px;text-align:right;font-family:'Liberation Mono',monospace;font-size:7.62px;line-height:10px;color:#6a6a6a;-webkit-text-stroke:0.2px">45</div>
<div class="t" style="left:504.00px;top:397.23px;font-family:'Liberation Mono',monospace;font-size:7.583px;line-height:10px;white-space:pre;-webkit-text-stroke:0.18px"><span class="tg">&lt;td </span><span class="at">colspan</span><span class="eq">=</span><span class="vl">&quot;2&quot;</span><span class="tg">&gt;</span><span class="j" style="width:4.55px"></span><span class="tg">&lt;/td&gt;</span></div>
<div class="t" style="left:444px;top:406.87px;width:20.6px;text-align:right;font-family:'Liberation Mono',monospace;font-size:7.62px;line-height:10px;color:#6a6a6a;-webkit-text-stroke:0.2px">46</div>
<div class="t" style="left:494.90px;top:406.87px;font-family:'Liberation Mono',monospace;font-size:7.583px;line-height:10px;white-space:pre;-webkit-text-stroke:0.18px"><span class="tg">&lt;/tr&gt;</span></div>
<div class="t" style="left:444px;top:416.50px;width:20.6px;text-align:right;font-family:'Liberation Mono',monospace;font-size:7.62px;line-height:10px;color:#6a6a6a;-webkit-text-stroke:0.2px">47</div>
<div class="t" style="left:494.90px;top:416.50px;font-family:'Liberation Mono',monospace;font-size:7.583px;line-height:10px;white-space:pre;-webkit-text-stroke:0.18px"><span class="tg">&lt;tr&gt;</span></div>
<div class="t" style="left:444px;top:426.14px;width:20.6px;text-align:right;font-family:'Liberation Mono',monospace;font-size:7.62px;line-height:10px;color:#6a6a6a;-webkit-text-stroke:0.2px">48</div>
<div class="t" style="left:504.00px;top:426.14px;font-family:'Liberation Mono',monospace;font-size:7.583px;line-height:10px;white-space:pre;-webkit-text-stroke:0.18px"><span class="tg">&lt;td </span><span class="at">colspan</span><span class="eq">=</span><span class="vl">&quot;2&quot;</span><span class="tg">&gt;</span><span class="j" style="width:38.0px">ハンバーグ</span><span class="tg">&lt;/td&gt;</span></div>
<div class="t" style="left:444px;top:435.78px;width:20.6px;text-align:right;font-family:'Liberation Mono',monospace;font-size:7.62px;line-height:10px;color:#6a6a6a;-webkit-text-stroke:0.2px">49</div>
<div class="t" style="left:504.00px;top:435.78px;font-family:'Liberation Mono',monospace;font-size:7.583px;line-height:10px;white-space:pre;-webkit-text-stroke:0.18px"><span class="tg">&lt;td&gt;</span><span class="j" style="width:4.55px"></span><span class="tg">&lt;/td&gt;</span></div>
<div class="t" style="left:444px;top:445.41px;width:20.6px;text-align:right;font-family:'Liberation Mono',monospace;font-size:7.62px;line-height:10px;color:#6a6a6a;-webkit-text-stroke:0.2px">50</div>
<div class="t" style="left:504.00px;top:445.41px;font-family:'Liberation Mono',monospace;font-size:7.583px;line-height:10px;white-space:pre;-webkit-text-stroke:0.18px"><span class="tg">&lt;td </span><span class="at">colspan</span><span class="eq">=</span><span class="vl">&quot;2&quot;</span><span class="tg">&gt;</span><span class="j" style="width:4.55px"></span><span class="tg">&lt;/td&gt;</span></div>
<div class="t" style="left:444px;top:455.05px;width:20.6px;text-align:right;font-family:'Liberation Mono',monospace;font-size:7.62px;line-height:10px;color:#6a6a6a;-webkit-text-stroke:0.2px">51</div>
<div class="t" style="left:494.90px;top:455.05px;font-family:'Liberation Mono',monospace;font-size:7.583px;line-height:10px;white-space:pre;-webkit-text-stroke:0.18px"><span class="tg">&lt;/tr&gt;</span></div>
<div class="t" style="left:444px;top:464.68px;width:20.6px;text-align:right;font-family:'Liberation Mono',monospace;font-size:7.62px;line-height:10px;color:#6a6a6a;-webkit-text-stroke:0.2px">52</div>
<div class="t" style="left:485.80px;top:464.68px;font-family:'Liberation Mono',monospace;font-size:7.583px;line-height:10px;white-space:pre;-webkit-text-stroke:0.18px"><span class="tg">&lt;/tbody&gt;</span></div>
<div class="t" style="left:444px;top:474.32px;width:20.6px;text-align:right;font-family:'Liberation Mono',monospace;font-size:7.62px;line-height:10px;color:#6a6a6a;-webkit-text-stroke:0.2px">53</div>
<div class="t" style="left:476.70px;top:474.32px;font-family:'Liberation Mono',monospace;font-size:7.583px;line-height:10px;white-space:pre;-webkit-text-stroke:0.18px"><span class="tg">&lt;/table&gt;</span></div>
<div class="t" style="left:444px;top:483.96px;width:20.6px;text-align:right;font-family:'Liberation Mono',monospace;font-size:7.62px;line-height:10px;color:#6a6a6a;-webkit-text-stroke:0.2px">54</div>
<div class="t" style="left:476.70px;top:483.96px;font-family:'Liberation Mono',monospace;font-size:7.583px;line-height:10px;white-space:pre;-webkit-text-stroke:0.18px"><span class="tg">&lt;/body&gt;</span></div>
<svg class="a" style="left:0;top:0" width="900" height="488"><path d="M468.2 42.80 L472.2 42.80 L470.2 46.60Z" fill="#8a8a8a"/><path d="M468.2 52.44 L472.2 52.44 L470.2 56.24Z" fill="#8a8a8a"/><path d="M468.2 62.07 L472.2 62.07 L470.2 65.87Z" fill="#8a8a8a"/><path d="M468.2 71.71 L472.2 71.71 L470.2 75.51Z" fill="#8a8a8a"/><path d="M468.2 139.16 L472.2 139.16 L470.2 142.96Z" fill="#8a8a8a"/><circle cx="579.07" cy="170.57" r="1.85" fill="none" stroke="#d4d4d4" stroke-width="0.85"/><path d="M468.2 187.34 L472.2 187.34 L470.2 191.14Z" fill="#8a8a8a"/><circle cx="524.48" cy="209.11" r="2.0" fill="#8a8a8a" stroke="#d0d0d0" stroke-width="0.7"/><circle cx="579.07" cy="218.75" r="1.85" fill="none" stroke="#d4d4d4" stroke-width="0.85"/><path d="M468.2 235.52 L472.2 235.52 L470.2 239.32Z" fill="#8a8a8a"/><circle cx="524.48" cy="266.93" r="2.0" fill="#8a8a8a" stroke="#d0d0d0" stroke-width="0.7"/><circle cx="579.07" cy="276.56" r="1.85" fill="none" stroke="#d4d4d4" stroke-width="0.85"/><path d="M468.2 293.34 L472.2 293.34 L470.2 297.14Z" fill="#8a8a8a"/><path d="M522.27 316.91 L524.48 313.11 L526.68 316.91Z" fill="#555" stroke="#e0e0e0" stroke-width="0.85"/><circle cx="524.48" cy="324.74" r="1.85" fill="none" stroke="#d4d4d4" stroke-width="0.85"/><circle cx="524.48" cy="334.38" r="2.0" fill="#8a8a8a" stroke="#d0d0d0" stroke-width="0.7"/><path d="M468.2 351.15 L472.2 351.15 L470.2 354.95Z" fill="#8a8a8a"/><circle cx="524.48" cy="392.20" r="2.0" fill="#8a8a8a" stroke="#d0d0d0" stroke-width="0.7"/><path d="M577.57 400.33 L580.57 403.33 M580.57 400.33 L577.57 403.33" stroke="#d0d0d0" stroke-width="0.8"/><path d="M468.2 418.60 L472.2 418.60 L470.2 422.40Z" fill="#8a8a8a"/><path d="M522.27 442.18 L524.48 438.38 L526.68 442.18Z" fill="#555" stroke="#e0e0e0" stroke-width="0.85"/><circle cx="579.07" cy="450.01" r="1.85" fill="none" stroke="#d4d4d4" stroke-width="0.85"/></svg>
</body></html>
